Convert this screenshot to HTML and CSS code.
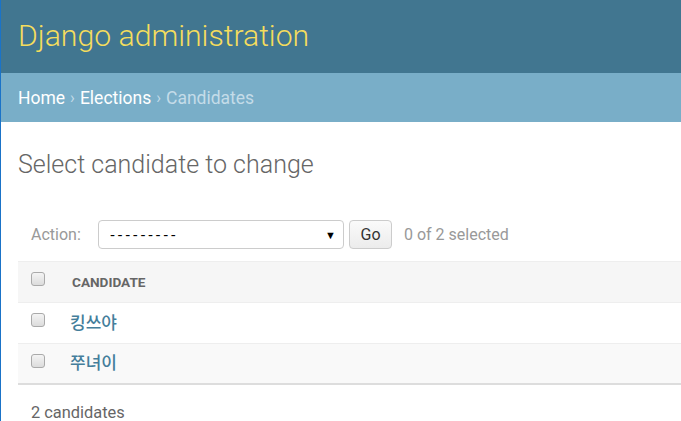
FILE: index.html
```html
<!DOCTYPE html>
<html>
<head>
<meta charset="utf-8">
<link rel="stylesheet" href="styles.css">
</head>
<body>
<div class="page">
  <header class="header">
    <h1 class="branding">Django administration</h1>
  </header>
  <nav class="breadcrumbs">
    <a href="#">Home</a><span class="sep">›</span><a href="#">Elections</a><span class="sep">›</span><span class="current">Candidates</span>
  </nav>
  <main class="content">
    <h1 class="title">Select candidate to change</h1>
    <div class="actions">
      <label class="action-label">Action:</label>
      <div class="select"><span class="dashes">---------</span><span class="arrow">▼</span></div>
      <button class="go">Go</button>
      <span class="counter">0 of 2 selected</span>
    </div>
    <div class="results">
      <div class="row head">
        <span class="cb"></span><span class="col-title">CANDIDATE</span>
      </div>
      <div class="row r1">
        <span class="cb"></span><a class="name" href="#">킹쓰야</a>
      </div>
      <div class="row r2">
        <span class="cb"></span><a class="name" href="#">쭈녀이</a>
      </div>
    </div>
    <p class="paginator">2 candidates</p>
  </main>
</div>
</body>
</html>
```

FILE: styles.css
```css
* { box-sizing: border-box; }
html, body { margin: 0; padding: 0; }
body {
  font-family: Roboto, "Noto Sans CJK KR", sans-serif;
  background: #fff;
  color: #333;
  width: 681px;
  height: 421px;
  overflow: hidden;
}
.page {
  border-left: 1px solid #1a73c8;
  min-height: 421px;
}
.header {
  background: #417690;
  height: 73px;
  display: flex;
  align-items: center;
  padding: 0 17px;
}
.branding {
  margin: 0;
  font-weight: 300;
  font-size: 30.2px;
  color: #f5dd5d;
  position: relative;
  top: -1px;
}
.breadcrumbs {
  background: #79aec8;
  height: 49px;
  display: flex;
  align-items: center;
  padding: 0 17px;
  font-size: 17.5px;
  color: #c4dce8;
}
.breadcrumbs a { color: #fff; text-decoration: none; }
.breadcrumbs .sep { padding: 0 5px; font-size: 16px; }
.content { padding: 0 0 0 17px; }
.title {
  margin: 28px 0 0 0;
  font-size: 25px;
  font-weight: 300;
  color: #666;
  line-height: 30px;
}
.actions {
  display: flex;
  align-items: center;
  margin-top: 40px;
  padding-left: 13px;
  height: 29px;
  font-size: 16px;
}
.action-label { color: #999; width: 67px; }
.select {
  width: 246px;
  height: 29px;
  border: 1px solid #ccc;
  border-radius: 4px;
  display: flex;
  align-items: center;
  justify-content: space-between;
  padding: 0 7px 0 11px;
  font-family: Arial, "Liberation Sans", sans-serif;
  color: #000;
}
.dashes { font-size: 15px; letter-spacing: 2.6px; }
.arrow { font-size: 11px; }
.go {
  margin-left: 5px;
  width: 43px;
  height: 29px;
  border: 1px solid #ccc;
  border-radius: 4px;
  background: linear-gradient(#fafafa, #ececec);
  font-family: Roboto, sans-serif;
  font-size: 16px;
  color: #333;
  padding: 0;
}
.counter { color: #999; margin-left: 12px; }
.results { margin-top: 12px; }
.row {
  display: flex;
  align-items: center;
  height: 41px;
  border-top: 1px solid #eee;
  padding-left: 13px;
}
.row.head { background: #f6f6f6; }
.row.r1 { background: #fff; }
.row.r2 { background: #f9f9f9; border-bottom: 2px solid #ddd; height: 42px; }
.cb {
  width: 14px;
  height: 14px;
  border: 1px solid #aaa;
  border-radius: 3px;
  background: linear-gradient(#f4f4f4, #dcdcdc);
  position: relative;
  top: -3px;
}
.col-title {
  margin-left: 27px;
  font-size: 13.6px;
  font-weight: 700;
  color: #666;
}
.name {
  margin-left: 25px;
  font-size: 17px;
  font-weight: 500;
  color: #447e9b;
  text-decoration: none;
  font-family: "Noto Sans CJK KR", sans-serif;
  position: relative;
  top: -2px;
}
.paginator {
  margin: 18px 0 0 13px;
  font-size: 16.4px;
  color: #666;
}
```
